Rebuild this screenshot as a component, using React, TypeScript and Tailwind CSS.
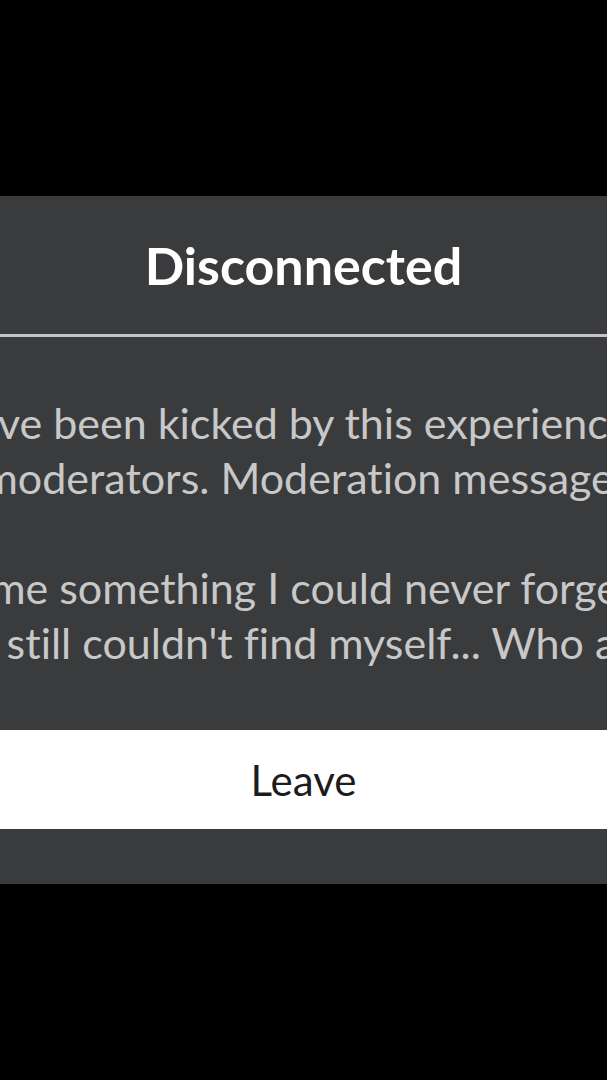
import React from 'react';

// Lines of the moderation message, as the dialog wraps them.
const messageLines = [
  'You have been kicked by this experience or its',
  'moderators. Moderation message:',
  '',
  'Gave me something I could never forget, and',
  'yet I still couldn\'t find myself... Who am I?',
];

const App: React.FC = () => {
  return (
    <div className="w-full h-[1080px] bg-black overflow-hidden flex flex-col font-['Lato',sans-serif] [font-variant-ligatures:none]">
      <div className="h-[196px] shrink-0" />

      <div className="bg-[#393b3d] flex flex-col">
        {/* Header */}
        <div className="h-[138px] flex items-center justify-center">
          <h1 className="text-[52px] font-bold text-white leading-none">Disconnected</h1>
        </div>
        <div className="h-[3px] bg-[#c4c4c4]" />

        {/* Message */}
        <div className="pt-[58px] flex flex-col text-[43px] leading-[55px] text-[#c8c8c8]">
          {messageLines.map((line, i) => (
            <div key={i} className="h-[55px] flex justify-center whitespace-nowrap">
              <span>{line}</span>
            </div>
          ))}
        </div>

        {/* Action */}
        <div className="pt-[60px] pb-[55px]">
          <button className="w-full h-[99px] bg-white flex items-center justify-center text-[42px] text-[#1c1c1c] leading-none">
            Leave
          </button>
        </div>
      </div>
    </div>
  );
};

export default App;
